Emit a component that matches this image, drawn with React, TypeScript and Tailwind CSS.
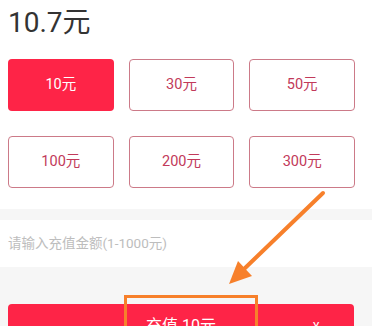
const AMOUNTS = [10, 30, 50, 100, 200, 300];

export default function App() {
  const selected = 10;
  return (
    <div
      className="relative w-[372px] h-[326px] overflow-hidden bg-white"
      style={{ fontFamily: 'Roboto, "Noto Sans CJK SC", sans-serif' }}
    >
      {/* balance */}
      <div className="pl-[8px] pt-[9px] h-[59px]">
        <p className="text-[28px] leading-[28px] text-[#333333]">10.7元</p>
      </div>

      {/* amount grid */}
      <div className="grid grid-cols-3 gap-x-[15px] gap-y-[25px] pl-[8px] pr-[17px]">
        {AMOUNTS.map((a) =>
          a === selected ? (
            <div
              key={a}
              className="h-[52px] rounded-[4px] bg-[#fe2447] text-white text-[14.5px] flex items-center justify-center"
            >
              {a}元
            </div>
          ) : (
            <div
              key={a}
              className="h-[52px] rounded-[4px] border border-[#cc7a88] text-[#c23a5a] text-[14.5px] flex items-center justify-center"
            >
              {a}元
            </div>
          )
        )}
      </div>

      {/* custom amount */}
      <div className="mt-[21px] h-[11px] bg-[#f6f6f6]" />
      <div className="h-[47px] bg-white flex items-center pl-[8px]">
        <span className="text-[13.5px] text-[#bdbdbd]">请输入充值金额(1-1000元)</span>
      </div>
      <div className="h-[60px] bg-[#f6f6f6] pt-[37px] pl-[8px] pr-[18px]">
        <div className="relative h-[46px] rounded-[4px] bg-[#fe2447] flex justify-center pt-[12px]">
          <span className="text-[16px] leading-[20px] text-white">充值 10元</span>
          <span className="absolute left-[305px] top-[17px] text-[12px] leading-[12px] text-white">¥</span>
        </div>
      </div>

      {/* annotation */}
      <svg className="absolute inset-0 pointer-events-none" width="372" height="326" viewBox="0 0 372 326">
        <line x1="323" y1="193" x2="243" y2="270" stroke="#f7802b" strokeWidth="4" strokeLinecap="round" />
        <polygon points="229,284 252,276 238,261" fill="#f7802b" />
        <rect x="125.5" y="296.5" width="131" height="40" fill="none" stroke="#f7802b" strokeWidth="3" />
      </svg>
    </div>
  );
}
